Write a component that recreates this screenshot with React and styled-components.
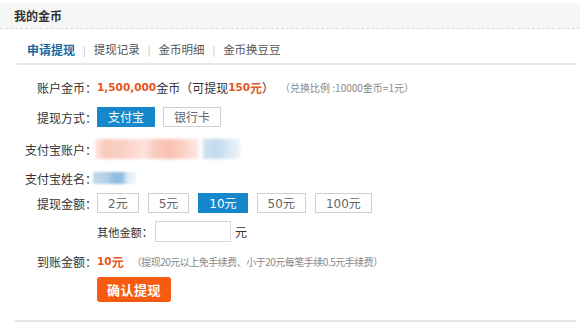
import React from 'react';
import styled, { createGlobalStyle } from 'styled-components';

const Global = createGlobalStyle`
  * { box-sizing: border-box; }
  html, body { margin: 0; padding: 0; background: #fff; }
  body {
    font-family: "Noto Sans CJK SC", "DejaVu Sans", sans-serif;
    font-size: 12px;
    color: #333;
  }
`;

const Page = styled.div`
  width: 580px;
  height: 327px;
  overflow: hidden;
  padding-top: 3px;
`;

const Header = styled.div`
  height: 26px;
  background: #f6f6f6;
  border-bottom: 1px dashed #d9d9d9;
  display: flex;
  align-items: center;
  padding-left: 14px;
  font-size: 12px;
  font-weight: bold;
  color: #333;
`;

const Tabs = styled.div`
  display: flex;
  align-items: center;
  height: 36px;
  margin: 0 3px 0 17px;
  padding: 6px 0 0 10px;
  border-bottom: 2px solid #e6e6e6;
`;

const Tab = styled.span`
  font-size: ${p => (p.$active ? 12 : 11.5)}px;
  color: ${p => (p.$active ? '#17689f' : '#555')};
  font-weight: ${p => (p.$active ? 'bold' : 'normal')};
`;

const Sep = styled.span`
  color: #bbb;
  font-size: 10px;
  margin: 0 8px;
`;

const Form = styled.div`
  margin: 0 4px 0 15px;
  padding: 10px 0 18px;
  border-bottom: 2px solid #e6e6e6;
`;

const Row = styled.div`
  display: flex;
  align-items: center;
  height: ${p => p.$h}px;
`;

const Label = styled.span`
  width: 82px;
  flex-shrink: 0;
  text-align: right;
  color: #333;
  white-space: nowrap;
`;

const Value = styled.div`
  display: flex;
  align-items: center;
  white-space: nowrap;
`;

const Orange = styled.span`
  color: #e8561d;
  font-weight: bold;
  font-family: "DejaVu Sans", "Noto Sans CJK SC", sans-serif;
  font-size: 10.5px;
`;

const OrangeCn = styled.span`
  color: #e8561d;
  font-weight: bold;
  font-size: 12px;
`;

const Note = styled.span`
  color: #888;
  font-size: 10px;
  letter-spacing: ${p => p.$ls || 0}px;
  margin-left: ${p => p.$ml}px;
`;

const Choices = styled.div`
  display: flex;
  align-items: center;
  gap: ${p => p.$gap}px;
`;

const Choice = styled.button`
  height: 20px;
  padding: 0 ${p => p.$px}px;
  border: 1px solid ${p => (p.$active ? '#1787cb' : '#cfcfcf')};
  background: ${p => (p.$active ? '#1787cb' : '#fff')};
  color: ${p => (p.$active ? '#fff' : '#666')};
  font-family: "DejaVu Sans", "Noto Sans CJK SC", sans-serif;
  font-size: 12px;
  line-height: 18px;
  border-radius: 0;
  cursor: pointer;
  & span { font-family: "Noto Sans CJK SC", sans-serif; }
`;

const Blur = styled.span`
  display: inline-block;
  width: ${p => p.$w}px;
  height: ${p => p.$hh}px;
  margin-left: ${p => p.$ml}px;
  background: ${p => p.$bg};
  filter: blur(${p => p.$b}px);
`;

const SubLabel = styled.span`
  font-size: 11.2px;
  color: #333;
  margin-right: 2px;
`;

const Input = styled.input`
  width: 76px;
  height: 21px;
  border: 1px solid #d6d6d6;
  outline: none;
  margin-right: 4px;
`;

const Submit = styled.button`
  margin: 5px 0 0 82px;
  width: 74px;
  height: 25px;
  border: none;
  border-radius: 3px;
  background: #f85a10;
  color: #fff;
  font-family: "Noto Sans CJK SC", sans-serif;
  font-size: 13px;
  font-weight: bold;
  letter-spacing: 0.5px;
  cursor: pointer;
`;

const tabs = ['申请提现', '提现记录', '金币明细', '金币换豆豆'];
const amounts = ['2', '5', '10', '50', '100'];

export default function App() {
  return (
    <Page>
      <Global />
      <Header>我的金币</Header>
      <Tabs>
        {tabs.map((t, i) => (
          <React.Fragment key={t}>
            {i > 0 && <Sep>|</Sep>}
            <Tab $active={i === 0}>{t}</Tab>
          </React.Fragment>
        ))}
      </Tabs>
      <Form>
        <Row $h={24}>
          <Label>账户金币：</Label>
          <Value>
            <Orange>1,500,000</Orange>
            金币（可提现
            <Orange>150</Orange>
            <OrangeCn>元</OrangeCn>）
            <Note $ml={6}>（兑换比例 :10000金币=1元）</Note>
          </Value>
        </Row>
        <Row $h={36}>
          <Label>提现方式：</Label>
          <Choices $gap={8}>
            <Choice $active $px={10}><span>支付宝</span></Choice>
            <Choice $px={10}><span>银行卡</span></Choice>
          </Choices>
        </Row>
        <Row $h={28}>
          <Label>支付宝账户：</Label>
          <Value>
            <Blur
              $w={104}
              $hh={20}
              $ml={-2}
              $b={1.5}
              $bg="linear-gradient(90deg, #fde8e2 0%, #f9c9bb 10%, #fbd2c6 28%, #fcdcd3 40%, #fbe3dc 48%, #f9cabd 58%, #f8c0b0 72%, #fbd3c8 86%, #fdece7 100%)"
            />
            <Blur
              $w={37}
              $hh={20}
              $ml={4}
              $b={1.5}
              $bg="linear-gradient(90deg, #d0e2f1 0%, #c2d9ed 40%, #d6e6f3 65%, #edf4f9 100%)"
            />
          </Value>
        </Row>
        <Row $h={30}>
          <Label>支付宝姓名：</Label>
          <Value>
            <Blur
              $w={43}
              $hh={12}
              $ml={-4}
              $b={0.8}
              $bg="linear-gradient(90deg, #c2daee 0%, #b0cfe9 35%, #8ebce0 50%, #93bfe1 68%, #dfecf6 80%, #eef5fa 100%)"
            />
          </Value>
        </Row>
        <Row $h={20}>
          <Label>提现金额：</Label>
          <Choices $gap={9}>
            {amounts.map(a => (
              <Choice key={a} $active={a === '10'} $px={10}>
                {a}<span>元</span>
              </Choice>
            ))}
          </Choices>
        </Row>
        <Row $h={37}>
          <Label />
          <Value>
            <SubLabel>其他金额：</SubLabel>
            <Input />
            元
          </Value>
        </Row>
        <Row $h={22}>
          <Label>到账金额：</Label>
          <Value>
            <Orange>10</Orange>
            <OrangeCn>元</OrangeCn>
            <Note $ml={8} $ls={-0.5}>（提现20元以上免手续费、小于20元每笔手续0.5元手续费）</Note>
          </Value>
        </Row>
        <Submit>确认提现</Submit>
      </Form>
    </Page>
  );
}
